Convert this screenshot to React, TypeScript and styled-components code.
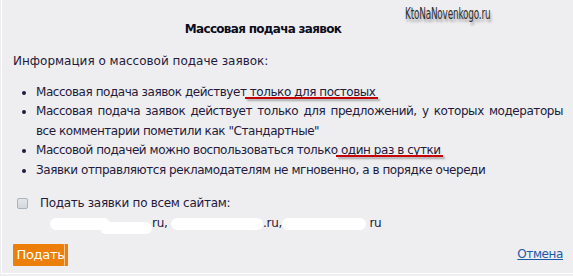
import React from 'react';
import styled, { createGlobalStyle } from 'styled-components';

const Global = createGlobalStyle`
  html, body { margin: 0; padding: 0; background: #eeeef0; }
  body { font-family: "DejaVu Sans", Verdana, sans-serif; }
`;

const Frame = styled.div`
  position: relative;
  width: 573px;
  height: 276px;
  box-sizing: border-box;
  padding: 0 0 2px 1px;
  background: #eeeef0;
  overflow: hidden;
`;

const Panel = styled.div`
  height: 100%;
  box-sizing: border-box;
  border-left: 1px solid #ffffff;
  border-bottom: 1px solid #ffffff;
  padding: 19px 10px 0 11px;
  display: flex;
  flex-direction: column;
  color: #231a3c;
  font-size: 12px;
  line-height: 19.5px;
`;

const Title = styled.div`
  font-weight: bold;
  font-size: 12px;
  letter-spacing: -0.7px;
  line-height: 20px;
  color: #0c0c1c;
  text-align: center;
  padding-right: 50px;
`;

const Info = styled.div`
  margin-top: 13px;
`;

const List = styled.ul`
  margin: 11px 0 0;
  padding: 0 0 0 23px;
  list-style: disc;
  letter-spacing: -0.45px;
`;

const Item = styled.li`
  text-align: justify;
`;

const Mark = styled.span`
  position: relative;
  &::after {
    content: "";
    position: absolute;
    left: -5px;
    right: -2px;
    bottom: 0px;
    height: 2px;
    background: #c40000;
    box-shadow: 2px 2px 2px rgba(0, 0, 0, 0.3);
  }
`;

const CheckRow = styled.div`
  margin-top: 14px;
  display: flex;
  align-items: flex-start;
  gap: 12px;
  padding-left: 4px;
  letter-spacing: -0.3px;
`;

const Box = styled.span`
  flex: none;
  width: 11px;
  height: 11px;
  margin-top: 4px;
  box-sizing: border-box;
  border: 1px solid #a8b4be;
  border-radius: 2px;
  background: linear-gradient(#e4e7ea, #d3d8dc);
`;

const Sites = styled.div`
  margin-left: 10px;
`;

const Blob = styled.span`
  display: inline-flex;
  vertical-align: -3px;
  height: 16px;
`;

const Pill = styled.span<{ $w: number; $shift?: number; $down?: number }>`
  display: inline-block;
  width: ${p => p.$w}px;
  height: 12px;
  margin-left: ${p => p.$shift ?? 0}px;
  margin-top: ${p => p.$down ?? 0}px;
  background: #ffffff;
  border-radius: 6px;
`;

const Footer = styled.div`
  margin-top: 10px;
  display: flex;
  justify-content: space-between;
  align-items: center;
`;

const Button = styled.button`
  width: 55px;
  height: 22px;
  padding: 0;
  border: none;
  border-radius: 1px;
  background: #ec7f0a;
  color: #ffffff;
  font-family: "DejaVu Sans", Verdana, sans-serif;
  font-size: 13px;
  letter-spacing: -0.3px;
  box-shadow: inset -3px 0 0 #ec7f0a, inset -4px 0 0 #f8c894;
`;

const Cancel = styled.a`
  color: #1a5aa8;
  text-decoration: underline;
  font-size: 12px;
  letter-spacing: -0.4px;
`;

const Watermark = styled.div`
  position: absolute;
  top: 5px;
  left: 405px;
  font-family: "DejaVu Sans Condensed", "Liberation Sans Narrow", sans-serif;
  font-stretch: condensed;
  font-size: 15px;
  letter-spacing: -0.3px;
  color: #2e2e2e;
  transform: scaleX(0.66);
  transform-origin: left center;
  text-shadow: 2px 3px 3px rgba(0, 0, 0, 0.35);
`;

export default function App() {
  return (
    <>
      <Global />
      <Frame>
        <Panel>
          <Title>Массовая подача заявок</Title>
          <Info>Информация о массовой подаче заявок:</Info>
          <List>
            <Item>
              Массовая подача заявок действует <Mark>только для постовых</Mark>
            </Item>
            <Item>
              Массовая подача заявок действует только для предложений, у которых модераторы все комментарии пометили как "Стандартные"
            </Item>
            <Item>
              Массовой подачей можно воспользоваться только <Mark>один раз в сутки</Mark>
            </Item>
            <Item>Заявки отправляются рекламодателям не мгновенно, а в порядке очереди</Item>
          </List>
          <CheckRow>
            <Box />
            <div>
              Подать заявки по всем сайтам:
              <Sites>
                <Blob>
                  <Pill $w={60} />
                  <Pill $w={52} $shift={-10} $down={4} />
                </Blob>
                ru,{' '}
                <Blob>
                  <Pill $w={92} $down={2} />
                </Blob>
                .ru,
                <Blob>
                  <Pill $w={84} $down={2} />
                </Blob>
                {' '}ru
              </Sites>
            </div>
          </CheckRow>
          <Footer>
            <Button>Подать</Button>
            <Cancel href="#">Отмена</Cancel>
          </Footer>
        </Panel>
        <Watermark>KtoNaNovenkogo.ru</Watermark>
      </Frame>
    </>
  );
}
